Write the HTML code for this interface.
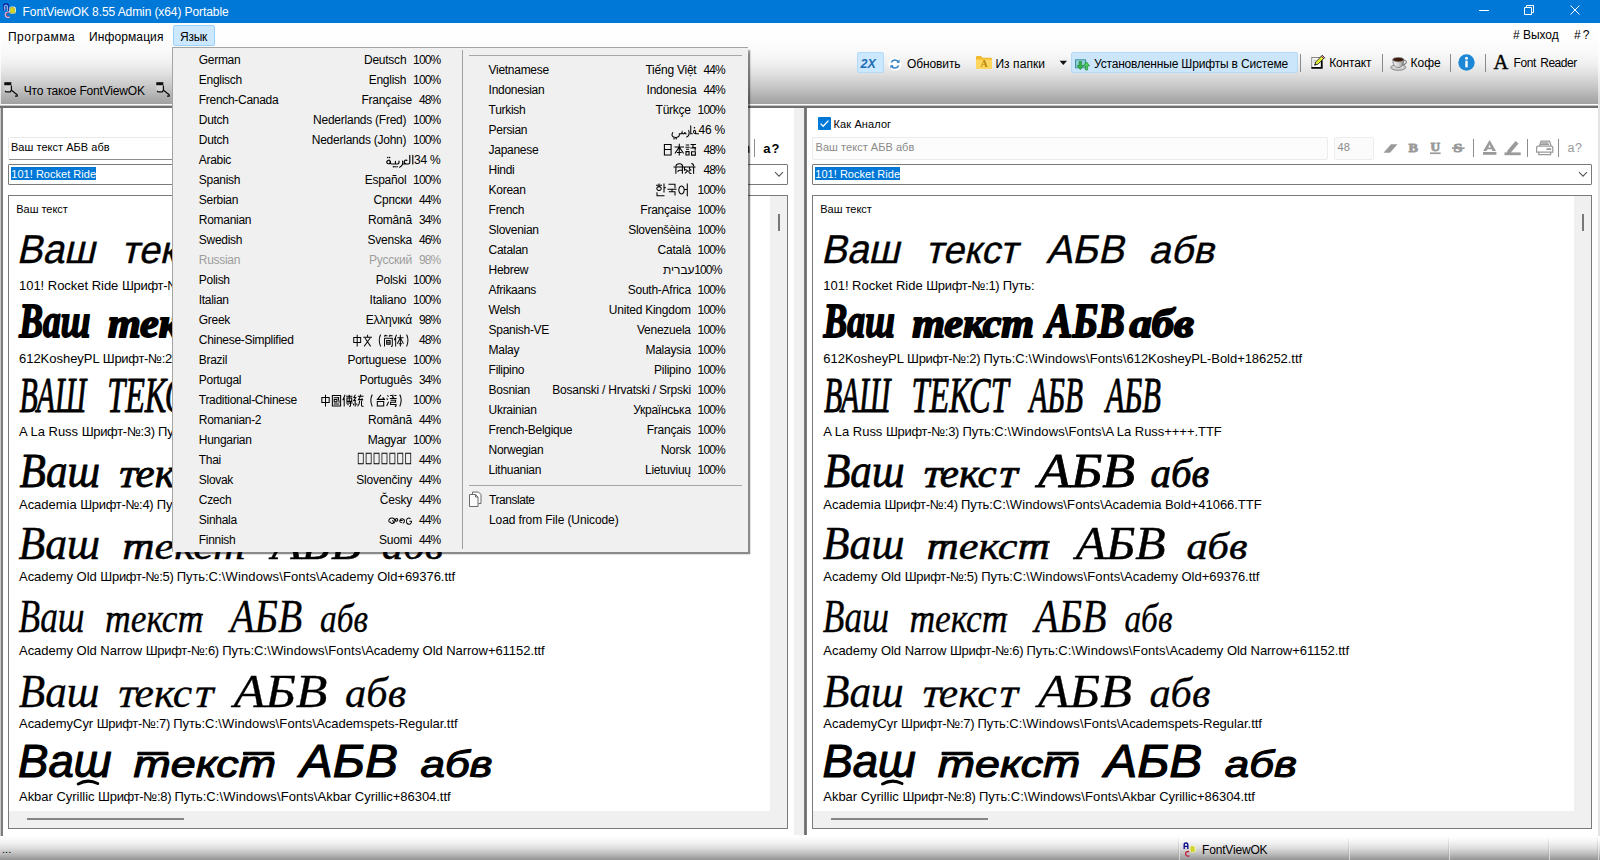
<!DOCTYPE html>
<html lang="ru"><head><meta charset="utf-8"><title>FontViewOK</title>
<style>
html,body{margin:0;padding:0}
body{width:1600px;height:860px;position:relative;overflow:hidden;background:#fff;font-family:"Liberation Sans",sans-serif}
svg{position:absolute;overflow:visible}
</style></head><body>
<div style="position:absolute;left:0px;top:0px;width:1600px;height:23px;box-sizing:border-box;background:#0078d7;"></div>
<svg style="left:3px;top:3px" width="14" height="16" viewBox="0 0 14 16">
<path d="M1 8V2.5Q1 1 3 1Q5 1 5 2.5V8M1 5H5" fill="none" stroke="#00128c" stroke-width="1.6"/>
<path d="M1.3 8V3Q1.3 2 3 2Q4.6 2 4.6 3V8M1.3 5H4.6" fill="none" stroke="#dfe9ff" stroke-width=".7"/>
<rect x="6.3" y="3.6" width="6.6" height="7.2" rx="2.4" fill="#f4f7d0"/>
<path d="M7.6 4.6h2.4q1.6 0 1.6 1.3q0 1.1-1.2 1.3q1.5.2 1.5 1.5q0 1.4-1.8 1.4H7.6z" fill="#d7dc1e" stroke="#8d8f10" stroke-width=".5"/>
<path d="M6.3 9.3Q2.4 8.6 2.4 11.6Q2.4 14.8 6.6 14" fill="none" stroke="#e9c3da" stroke-width="1.5"/>
<path d="M6 9.6Q3 9 3 11.6Q3 14 6.4 13.6" fill="none" stroke="#b4244a" stroke-width=".7"/>
</svg>
<div style="position:absolute;left:22.6px;top:5px;font:normal normal 12px/14px 'Liberation Sans',sans-serif;color:#fff;white-space:pre;letter-spacing:-0.09px;">FontViewOK 8.55 Admin (x64) Portable</div>
<svg style="left:1470px;top:0" width="130" height="23" viewBox="0 0 130 23" fill="none" stroke="#fff" stroke-width="1">
<path d="M9 10.5h10"/>
<path d="M54.5 7.5h7v7h-7zM56.5 7.5v-2h7v7h-2"/>
<path d="M100.5 5.5l9 9M109.5 5.5l-9 9"/>
</svg>
<div style="position:absolute;left:0px;top:23px;width:1600px;height:81px;box-sizing:border-box;background:linear-gradient(#ffffff 0%,#fdfdfd 22%,#f8f8f8 38%,#f0f0f0 50%,#e1e1e1 62%,#cbcbcb 76%,#b2b2b2 90%,#a1a1a1 100%);"></div>
<div style="position:absolute;left:0px;top:23px;width:1px;height:81px;box-sizing:border-box;background:rgba(255,255,255,.75);"></div>
<div style="position:absolute;left:1598px;top:23px;width:2px;height:81px;box-sizing:border-box;background:rgba(255,255,255,.6);"></div>
<div style="position:absolute;left:0px;top:104px;width:1600px;height:1px;box-sizing:border-box;background:#fbfbfb;"></div>
<div style="position:absolute;left:0px;top:105px;width:1600px;height:1px;box-sizing:border-box;background:#c4c4c4;"></div>
<div style="position:absolute;left:0px;top:106px;width:1600px;height:2px;box-sizing:border-box;background:#6f6f6f;"></div>
<div style="position:absolute;left:8px;top:29.5px;font:normal normal 12px/14px 'Liberation Sans',sans-serif;color:#000;white-space:pre;letter-spacing:0.475px;">Программа</div>
<div style="position:absolute;left:89px;top:29.5px;font:normal normal 12px/14px 'Liberation Sans',sans-serif;color:#000;white-space:pre;letter-spacing:0.105px;">Информация</div>
<div style="position:absolute;left:173px;top:25px;width:42px;height:21px;box-sizing:border-box;background:#cce8ff;border:1px solid #99d1ff;border-radius:2px;"></div>
<div style="position:absolute;left:180px;top:29.5px;font:normal normal 12px/14px 'Liberation Sans',sans-serif;color:#000;white-space:pre;letter-spacing:-0.245px;">Язык</div>
<div style="position:absolute;left:1513px;top:27.5px;font:normal normal 12px/14px 'Liberation Sans',sans-serif;color:#000;white-space:pre;letter-spacing:-0.045px;"># Выход</div>
<div style="position:absolute;left:1574px;top:27.5px;font:normal normal 12px/14px 'Liberation Sans',sans-serif;color:#000;white-space:pre;letter-spacing:-0.645px;"># ?</div>
<svg style="left:3px;top:81px" width="17" height="18" viewBox="0 0 17 18" fill="none" stroke="#0a0a0a" stroke-width="1.200">
<rect x="1.300" y="4.200" width="6.800" height="6.400" fill="#d9d9d9" stroke="none" opacity=".7"/>
<path d="M1.300 2.700h7" stroke-width="3"/><path d="M3.600 2.300h.1M6 2.900h.1" stroke="#e8e8e8" stroke-width="1"/>
<path d="M8.400 4.600V9.300M2 9.800l1.100 1.100h4.200l1.100-1.700M8.500 9.200l5.700 4.600v1.400h-2.200"/>
</svg>
<div style="position:absolute;left:23.8px;top:83.6px;font:normal normal 12px/14px 'Liberation Sans',sans-serif;color:#000;white-space:pre;letter-spacing:-0.185px;">Что такое FontViewOK</div>
<svg style="left:155px;top:81px" width="17" height="18" viewBox="0 0 17 18" fill="none" stroke="#0a0a0a" stroke-width="1.200">
<rect x="1.300" y="4.200" width="6.800" height="6.400" fill="#d9d9d9" stroke="none" opacity=".7"/>
<path d="M1.300 2.700h7" stroke-width="3"/><path d="M3.600 2.300h.1M6 2.900h.1" stroke="#e8e8e8" stroke-width="1"/>
<path d="M8.400 4.600V9.300M2 9.800l1.100 1.100h4.200l1.100-1.700M8.500 9.200l5.700 4.600v1.400h-2.200"/>
</svg>
<div style="position:absolute;left:857px;top:52px;width:27px;height:21px;box-sizing:border-box;background:#cce8ff;border:1px solid #b3d9f8;border-radius:2px;"></div>
<div style="position:absolute;left:860.4px;top:57.400000000000006px;font:italic bold 12.5px/14px 'Liberation Sans',sans-serif;color:#1c6db2;white-space:pre;letter-spacing:0.255px;">2X</div>
<svg style="left:888px;top:57px" width="14" height="14" viewBox="0 0 14 14">
<circle cx="7" cy="7" r="6.6" fill="#fff"/>
<path d="M10.6 5.2A4 4 0 0 0 3.3 5.6M3.4 8.8A4 4 0 0 0 10.7 8.4" fill="none" stroke="#2f7fc1" stroke-width="1.5"/>
<path d="M11.6 2.6v3.2H8.4zM2.4 11.4V8.2h3.2z" fill="#2f7fc1"/>
</svg>
<div style="position:absolute;left:907px;top:57.099999999999994px;font:normal normal 12px/14px 'Liberation Sans',sans-serif;color:#000;white-space:pre;letter-spacing:-0.115px;">Обновить</div>
<svg style="left:975px;top:55px" width="18" height="15" viewBox="0 0 18 15">
<path d="M1 2.2Q1 1 2.2 1H6l1.6 1.8H16q1 0 1 1V13q0 1-1 1H2q-1 0-1-1z" fill="#f1b92f"/>
<path d="M1 4.6h16V13q0 1-1 1H2q-1 0-1-1z" fill="#ffd75e"/>
<text x="9" y="12.4" font-family="Liberation Serif,serif" font-weight="bold" font-size="10" text-anchor="middle" fill="#b8860b">A</text>
</svg>
<div style="position:absolute;left:995.4px;top:57.099999999999994px;font:normal normal 12px/14px 'Liberation Sans',sans-serif;color:#000;white-space:pre;letter-spacing:0.085px;">Из папки</div>
<svg style="left:1059px;top:60px" width="9" height="6" viewBox="0 0 9 6"><path d="M.6 .8h7.4L4.3 5z" fill="#111"/></svg>
<div style="position:absolute;left:1071px;top:52px;width:227px;height:21px;box-sizing:border-box;background:#cbe6fb;border:1px solid #b3d9f8;border-radius:2px;"></div>
<svg style="left:1075px;top:59px" width="16" height="13" viewBox="0 0 16 13">
<rect x=".5" y=".8" width="10" height="8" fill="#8fd0d8" stroke="#3f8f9c" stroke-width="1"/>
<path d="M4.2 2.5h2.2v4h2l-3.1 4.2-3.1-4.2h2z" fill="#36b64a" stroke="#157a26" stroke-width=".6"/>
<path d="M10.4 11h2.2V7h2L11.5 2.8 8.4 7h2z" fill="#4fd062" stroke="#157a26" stroke-width=".6"/>
</svg>
<div style="position:absolute;left:1094px;top:57.099999999999994px;font:normal normal 12px/14px 'Liberation Sans',sans-serif;color:#000;white-space:pre;letter-spacing:-0.175px;">Установленные Шрифты в Системе</div>
<div style="position:absolute;left:1300px;top:54px;width:1px;height:18px;box-sizing:border-box;background:#8a8a8a;"></div>
<svg style="left:1310px;top:54px" width="16" height="16" viewBox="0 0 16 16">
<rect x="1.800" y="3.400" width="9.400" height="10" fill="#fff" stroke="#6a6a6a" stroke-width=".8"/>
<path d="M1.400 13.800h10.400v-7.600" fill="none" stroke="#000" stroke-width="1.700"/>
<path d="M4.600 11.200l1.200-3.400 6.400-6.400 2.300 2.300-6.400 6.400z" fill="#e2ea2c" stroke="#222" stroke-width=".9"/>
<path d="M11.300 2.300l1-1 2.300 2.300-1 1z" fill="#ee8fa6" stroke="#222" stroke-width=".7"/>
<path d="M4.600 11.200l.6-1.800 1.200 1.200z" fill="#111"/>
<path d="M3.200 6.200h3M3.200 8.200h2" stroke="#9a9a9a" stroke-width=".7"/>
</svg>
<div style="position:absolute;left:1329.2px;top:55.7px;font:normal normal 12px/14px 'Liberation Sans',sans-serif;color:#000;white-space:pre;letter-spacing:-0.145px;">Контакт</div>
<div style="position:absolute;left:1382px;top:54px;width:1px;height:18px;box-sizing:border-box;background:#8a8a8a;"></div>
<svg style="left:1390px;top:55px" width="18" height="16" viewBox="0 0 18 16">
<defs><linearGradient id="cupg" x1="0" x2="1" y1="0" y2="0"><stop offset="0" stop-color="#f4f4f4"/><stop offset=".55" stop-color="#cfcfcf"/><stop offset="1" stop-color="#8e8e8e"/></linearGradient></defs>
<ellipse cx="8.300" cy="12.400" rx="7.600" ry="2.900" fill="#c9c9c9" stroke="#777" stroke-width=".8"/>
<ellipse cx="8.300" cy="12" rx="5" ry="1.500" fill="#e6e6e6"/>
<path d="M2.800 4.600Q2.800 12.600 8.300 12.600Q13.800 12.600 13.800 4.600z" fill="url(#cupg)" stroke="#6f6f6f" stroke-width=".8"/>
<path d="M13.600 5.600q3.200-.4 2.800 1.800-.5 2-3.600 2.300" fill="none" stroke="#7d7d7d" stroke-width="1.100"/>
<ellipse cx="8.300" cy="4.600" rx="5.500" ry="2.100" fill="#3d1a0c" stroke="#777" stroke-width=".7"/>
</svg>
<div style="position:absolute;left:1410.4px;top:55.7px;font:normal normal 12px/14px 'Liberation Sans',sans-serif;color:#000;white-space:pre;letter-spacing:0.055px;">Кофе</div>
<div style="position:absolute;left:1450px;top:54px;width:1px;height:18px;box-sizing:border-box;background:#8a8a8a;"></div>
<svg style="left:1458px;top:54px" width="17" height="17" viewBox="0 0 17 17">
<circle cx="8.5" cy="8.5" r="8.2" fill="#1c87d4"/>
<rect x="7.3" y="6.7" width="2.4" height="6.6" fill="#fff"/><circle cx="8.5" cy="4.2" r="1.5" fill="#fff"/>
</svg>
<div style="position:absolute;left:1485px;top:54px;width:1px;height:18px;box-sizing:border-box;background:#8a8a8a;"></div>
<div style="position:absolute;left:1493.4px;top:50.599999999999994px;font:normal normal 20.5px/22px 'Liberation Serif',serif;color:#000;white-space:pre;letter-spacing:0.055px;-webkit-text-stroke:.45px #000;">A</div>
<div style="position:absolute;left:1513.6px;top:55.599999999999994px;font:normal normal 12px/14px 'Liberation Sans',sans-serif;color:#000;white-space:pre;letter-spacing:-0.465px;word-spacing:1.6px;">Font Reader</div>
<div style="position:absolute;left:0px;top:835px;width:1600px;height:1px;box-sizing:border-box;background:#fdfdfd;"></div>
<div style="position:absolute;left:0px;top:836px;width:1600px;height:24px;box-sizing:border-box;background:linear-gradient(#ffffff 0%,#f4f4f4 25%,#dedede 50%,#bcbcbc 75%,#949494 100%);"></div>
<div style="position:absolute;left:2px;top:842.5px;font:normal normal 11px/12px 'Liberation Sans',sans-serif;color:#000;white-space:pre;letter-spacing:0.055px;">...</div>
<div style="position:absolute;left:1178px;top:838px;width:1px;height:22px;box-sizing:border-box;background:linear-gradient(#f0f0f0,#9a9a9a);"></div>
<div style="position:absolute;left:1179px;top:838px;width:1px;height:22px;box-sizing:border-box;background:linear-gradient(#ffffff,#d0d0d0);"></div>
<div style="position:absolute;left:1348px;top:838px;width:1px;height:22px;box-sizing:border-box;background:linear-gradient(#f0f0f0,#9a9a9a);"></div>
<div style="position:absolute;left:1349px;top:838px;width:1px;height:22px;box-sizing:border-box;background:linear-gradient(#ffffff,#d0d0d0);"></div>
<div style="position:absolute;left:1448px;top:838px;width:1px;height:22px;box-sizing:border-box;background:linear-gradient(#f0f0f0,#9a9a9a);"></div>
<div style="position:absolute;left:1449px;top:838px;width:1px;height:22px;box-sizing:border-box;background:linear-gradient(#ffffff,#d0d0d0);"></div>
<div style="position:absolute;left:1548px;top:838px;width:1px;height:22px;box-sizing:border-box;background:linear-gradient(#f0f0f0,#9a9a9a);"></div>
<div style="position:absolute;left:1549px;top:838px;width:1px;height:22px;box-sizing:border-box;background:linear-gradient(#ffffff,#d0d0d0);"></div>
<div style="position:absolute;left:1597px;top:838px;width:1px;height:22px;box-sizing:border-box;background:linear-gradient(#f0f0f0,#9a9a9a);"></div>
<div style="position:absolute;left:1598px;top:838px;width:1px;height:22px;box-sizing:border-box;background:linear-gradient(#ffffff,#d0d0d0);"></div>
<svg style="left:1183px;top:842px" width="15" height="16" viewBox="0 0 15 16">
<path d="M1.2 7V2.4Q1.2 1 3 1Q4.8 1 4.8 2.4V7M1.2 4.4H4.8" fill="none" stroke="#10108c" stroke-width="1.4"/>
<rect x="6.5" y="3.6" width="6.5" height="7" rx="2" fill="#f2f4b0"/>
<path d="M8 4.8h2q1.4 0 1.4 1.1 0 1-1 1.2 1.3.2 1.3 1.3 0 1.2-1.6 1.2H8z" fill="#d9de22" stroke="#a2a418" stroke-width=".4"/>
<path d="M6.2 9.6Q2.6 9 2.6 11.8Q2.6 14.6 6.4 14" fill="none" stroke="#c01f3c" stroke-width="1.3"/>
</svg>
<div style="position:absolute;left:1202px;top:843px;font:normal normal 12px/14px 'Liberation Sans',sans-serif;color:#000;white-space:pre;letter-spacing:-0.175px;">FontViewOK</div>
<div style="position:absolute;left:0px;top:108px;width:1px;height:728px;box-sizing:border-box;background:#c8c8c8;"></div>
<div style="position:absolute;left:1px;top:108px;width:2px;height:728px;box-sizing:border-box;background:#7d7d7d;"></div>
<div style="position:absolute;left:794px;top:108px;width:10px;height:727px;box-sizing:border-box;background:#f0f0f0;"></div>
<div style="position:absolute;left:804px;top:108px;width:3px;height:727px;box-sizing:border-box;background:linear-gradient(90deg,#8a8a8a,#6a6a6a 50%,#8f8f8f);"></div>
<div style="position:absolute;left:1598px;top:104px;width:2px;height:732px;box-sizing:border-box;background:#e4e4e4;"></div>
<div style="position:absolute;left:8px;top:137px;width:516px;height:23px;box-sizing:border-box;background:#fff;border:1px solid #e9e9e9;border-bottom-color:#8e8e8e;border-radius:2px;"></div>
<div style="position:absolute;left:11px;top:141px;font:normal normal 11px/12px 'Liberation Sans',sans-serif;color:#000;white-space:pre;letter-spacing:0.035px;">Ваш текст АБВ абв</div>
<div style="position:absolute;left:530px;top:137px;width:40px;height:23px;box-sizing:border-box;background:#fff;border:1px solid #ededed;border-radius:2px;"></div>
<div style="position:absolute;left:533.5px;top:141px;font:normal normal 11px/12px 'Liberation Sans',sans-serif;color:#000;white-space:pre;letter-spacing:0.055px;">48</div>
<svg style="left:579px;top:139px" width="210" height="18" viewBox="0 0 210 18" fill="#222" stroke="none">
<path d="M.5 13.800l7.500-8.600h6.500l-7.500 8.600z"/>
<g font-family="Liberation Serif,serif" font-weight="bold" stroke="#222" stroke-width=".9" stroke-linejoin="round">
<text x="25.400" y="13.400" font-size="13" textLength="9.400" lengthAdjust="spacingAndGlyphs">B</text>
<text x="47.400" y="12.400" font-size="12" textLength="9.600" lengthAdjust="spacingAndGlyphs">U</text>
<text x="70.600" y="13.400" font-size="13.500" textLength="9" lengthAdjust="spacingAndGlyphs">S</text></g>
<rect x="47" y="13.400" width="10.600" height="1.700"/>
<rect x="69" y="8.300" width="12.600" height="1.700"/>
<rect x="90" y="0" width="1" height="18" fill="#8d8d8d"/>
<path d="M106.600 1l6.400 11h-3.400l-.9-1.800h-4.200l-.9 1.800h-3.400zM106.600 5.400l-1.300 3h2.600z"/><rect x="100" y="13" width="13.400" height="2.800"/>
<path d="M124.500 11.500l8-9.500 3 2.400-8 9.500h-3.600z"/><rect x="121.500" y="13.400" width="16.200" height="2.800"/>
<rect x="144" y="0" width="1" height="18" fill="#8d8d8d"/>
<g fill="none" stroke="#222" stroke-width="1.250"><path d="M156.500 7l1.600-5h8.400l1.600 5M153.600 8.600Q153.600 7 155.200 7h13q1.600 0 1.600 1.600v4.600h-16.200zM155.800 13.200v2.400h11.800v-2.400M158.400 3.800h7M157.800 5.400h8.200"/></g><rect x="163.500" y="9.200" width="4.600" height="1.800"/>
<rect x="175" y="0" width="1" height="18" fill="#8d8d8d"/>
</svg>
<div style="position:absolute;left:763.3px;top:141.2px;font:normal bold 13px/15px 'Liberation Sans',sans-serif;color:#000;white-space:pre;letter-spacing:0.855px;">a?</div>
<div style="position:absolute;left:8px;top:164px;width:780px;height:21px;box-sizing:border-box;background:#fff;border:1px solid #7a7a7a;border-radius:1px;"></div>
<div style="position:absolute;left:10.6px;top:167px;width:85.4px;height:13px;box-sizing:border-box;background:#0078d7;"></div>
<div style="position:absolute;left:11.3px;top:167.6px;font:normal normal 11px/12px 'Liberation Sans',sans-serif;color:#fff;white-space:pre;letter-spacing:0.025px;">101! Rocket Ride</div>
<svg style="left:774px;top:171px" width="10" height="7" viewBox="0 0 10 7"><path d="M1 1.200l4 4 4-4" fill="none" stroke="#555" stroke-width="1.100"/></svg>
<div style="position:absolute;left:8px;top:195px;width:780px;height:634px;box-sizing:border-box;background:#fff;border:1px solid #7a7a7a;"></div>
<div style="position:absolute;left:770px;top:196px;width:17px;height:632px;box-sizing:border-box;background:#f0f0f0;"></div>
<div style="position:absolute;left:9px;top:811px;width:778px;height:17px;box-sizing:border-box;background:#f0f0f0;"></div>
<div style="position:absolute;left:777.5px;top:214px;width:2px;height:17px;box-sizing:border-box;background:#787878;"></div>
<div style="position:absolute;left:27px;top:818px;width:157px;height:2px;box-sizing:border-box;background:#858585;"></div>
<div style="position:absolute;left:16.3px;top:202.7px;font:normal normal 11px/12px 'Liberation Sans',sans-serif;color:#000;white-space:pre;letter-spacing:-0.045px;">Ваш текст</div>
<div style="position:absolute;left:812px;top:137px;width:516px;height:23px;box-sizing:border-box;background:#fcfcfc;border:1px solid #ececec;border-radius:2px;"></div>
<div style="position:absolute;left:815.6px;top:141px;font:normal normal 11px/12px 'Liberation Sans',sans-serif;color:#8b8b8b;white-space:pre;letter-spacing:0.035px;">Ваш текст АБВ абв</div>
<div style="position:absolute;left:1334px;top:137px;width:40px;height:23px;box-sizing:border-box;background:#fbfbfb;border:1px solid #ededed;border-radius:2px;"></div>
<div style="position:absolute;left:1337.5px;top:141px;font:normal normal 11px/12px 'Liberation Sans',sans-serif;color:#8b8b8b;white-space:pre;letter-spacing:0.055px;">48</div>
<svg style="left:1383px;top:139px" width="210" height="18" viewBox="0 0 210 18" fill="#9a9a9a" stroke="none">
<path d="M.5 13.800l7.500-8.600h6.500l-7.500 8.600z"/>
<g font-family="Liberation Serif,serif" font-weight="bold" stroke="#9a9a9a" stroke-width=".9" stroke-linejoin="round">
<text x="25.400" y="13.400" font-size="13" textLength="9.400" lengthAdjust="spacingAndGlyphs">B</text>
<text x="47.400" y="12.400" font-size="12" textLength="9.600" lengthAdjust="spacingAndGlyphs">U</text>
<text x="70.600" y="13.400" font-size="13.500" textLength="9" lengthAdjust="spacingAndGlyphs">S</text></g>
<rect x="47" y="13.400" width="10.600" height="1.700"/>
<rect x="69" y="8.300" width="12.600" height="1.700"/>
<rect x="90" y="0" width="1" height="18" fill="#8d8d8d"/>
<path d="M106.600 1l6.400 11h-3.400l-.9-1.800h-4.200l-.9 1.800h-3.400zM106.600 5.400l-1.300 3h2.600z"/><rect x="100" y="13" width="13.400" height="2.800"/>
<path d="M124.500 11.500l8-9.500 3 2.400-8 9.500h-3.600z"/><rect x="121.500" y="13.400" width="16.200" height="2.800"/>
<rect x="144" y="0" width="1" height="18" fill="#8d8d8d"/>
<g fill="none" stroke="#9a9a9a" stroke-width="1.250"><path d="M156.500 7l1.600-5h8.400l1.600 5M153.600 8.600Q153.600 7 155.200 7h13q1.600 0 1.600 1.600v4.600h-16.200zM155.800 13.200v2.400h11.800v-2.400M158.400 3.800h7M157.800 5.400h8.200"/></g><rect x="163.500" y="9.200" width="4.600" height="1.800"/>
<rect x="175" y="0" width="1" height="18" fill="#8d8d8d"/>
</svg>
<div style="position:absolute;left:1567.4px;top:141.4px;font:normal normal 12.5px/14px 'Liberation Sans',sans-serif;color:#9a9a9a;white-space:pre;letter-spacing:0.555px;">a?</div>
<div style="position:absolute;left:812px;top:164px;width:780px;height:21px;box-sizing:border-box;background:#fff;border:1px solid #7a7a7a;border-radius:1px;"></div>
<div style="position:absolute;left:814.6px;top:167px;width:85.4px;height:13px;box-sizing:border-box;background:#0078d7;"></div>
<div style="position:absolute;left:815.3px;top:167.6px;font:normal normal 11px/12px 'Liberation Sans',sans-serif;color:#fff;white-space:pre;letter-spacing:0.025px;">101! Rocket Ride</div>
<svg style="left:1578px;top:171px" width="10" height="7" viewBox="0 0 10 7"><path d="M1 1.200l4 4 4-4" fill="none" stroke="#555" stroke-width="1.100"/></svg>
<div style="position:absolute;left:818px;top:117px;width:13px;height:13px;box-sizing:border-box;background:#0078d7;border-radius:1px;"></div>
<svg style="left:818px;top:117px" width="13" height="13" viewBox="0 0 13 13"><path d="M2.600 6.600l2.600 2.600 5.200-5.600" fill="none" stroke="#fff" stroke-width="1.300"/></svg>
<div style="position:absolute;left:833.6px;top:117.8px;font:normal normal 11px/12px 'Liberation Sans',sans-serif;color:#000;white-space:pre;letter-spacing:0.105px;">Как Аналог</div>
<div style="position:absolute;left:812px;top:195px;width:780px;height:634px;box-sizing:border-box;background:#fff;border:1px solid #7a7a7a;"></div>
<div style="position:absolute;left:1574px;top:196px;width:17px;height:632px;box-sizing:border-box;background:#f0f0f0;"></div>
<div style="position:absolute;left:813px;top:811px;width:778px;height:17px;box-sizing:border-box;background:#f0f0f0;"></div>
<div style="position:absolute;left:1581.5px;top:214px;width:2px;height:17px;box-sizing:border-box;background:#787878;"></div>
<div style="position:absolute;left:831px;top:818px;width:157px;height:2px;box-sizing:border-box;background:#858585;"></div>
<div style="position:absolute;left:820.3px;top:202.7px;font:normal normal 11px/12px 'Liberation Sans',sans-serif;color:#000;white-space:pre;letter-spacing:-0.045px;">Ваш текст</div>
<svg style="left:0;top:0" width="1600" height="860" viewBox="0 0 1600 860" fill="#000">
<g transform="matrix(0.9547 0 0 1 16.58 263.00)" font-family="Liberation Sans,sans-serif" font-size="40.48" stroke="#000" stroke-width="0.4" stroke-linejoin="round"><text transform="translate(0.00 0) skewX(-13)">Ваш</text></g>
<g transform="matrix(0.9960 0 0 1 121.30 263.00)" font-family="Liberation Sans,sans-serif" font-size="38.18" stroke="#000" stroke-width="0.4" stroke-linejoin="round"><text transform="translate(0.00 0) skewX(-13)">текст</text></g>
<g transform="matrix(0.9641 0 0 1 241.79 263.00)" font-family="Liberation Sans,sans-serif" font-size="40.48" stroke="#000" stroke-width="0.4" stroke-linejoin="round"><text transform="translate(0.00 0) skewX(-13)">АБВ</text></g>
<g transform="matrix(1.0335 0 0 1 343.89 263.00)" font-family="Liberation Sans,sans-serif" font-size="38.18" stroke="#000" stroke-width="0.4" stroke-linejoin="round"><text transform="translate(0.00 0) skewX(-13)">абв</text></g>
<g transform="matrix(0.7385 0 0 1 19.29 336.55)" font-family="Liberation Serif,serif" font-size="48.24" stroke="#000" stroke-width="1.9" stroke-linejoin="round"><text x="0.00" font-style="italic" font-weight="bold">Ваш</text></g>
<g transform="matrix(1.0339 0 0 1 107.90 336.55)" font-family="Liberation Serif,serif" font-size="40.64" stroke="#000" stroke-width="1.9" stroke-linejoin="round"><text x="0.00" font-style="italic" font-weight="bold">текст</text></g>
<g transform="matrix(0.8342 0 0 1 241.30 336.55)" font-family="Liberation Serif,serif" font-size="48.24" stroke="#000" stroke-width="1.9" stroke-linejoin="round"><text x="0.00" font-style="italic" font-weight="bold">АБВ</text></g>
<g transform="matrix(1.0974 0 0 1 325.17 336.55)" font-family="Liberation Serif,serif" font-size="40.64" stroke="#000" stroke-width="1.9" stroke-linejoin="round"><text x="0.00" font-style="italic" font-weight="bold">абв</text></g>
<g transform="matrix(0.5913 0 0 1 19.60 411.55)" font-family="Liberation Serif,serif" font-size="50.53" stroke="#000" stroke-width="0.9" stroke-linejoin="round"><text x="0.00" font-style="italic">ВАШ</text></g>
<g transform="matrix(0.6392 0 0 1 107.19 411.55)" font-family="Liberation Serif,serif" font-size="50.53" stroke="#000" stroke-width="0.9" stroke-linejoin="round"><text x="0.00" font-style="italic">ТЕКСТ</text></g>
<g transform="matrix(0.5850 0 0 1 225.27 411.55)" font-family="Liberation Serif,serif" font-size="50.53" stroke="#000" stroke-width="0.9" stroke-linejoin="round"><text x="0.00" font-style="italic">АБВ</text></g>
<g transform="matrix(0.6049 0 0 1 301.35 411.55)" font-family="Liberation Serif,serif" font-size="50.53" stroke="#000" stroke-width="0.9" stroke-linejoin="round"><text x="0.00" font-style="italic">АБВ</text></g>
<g transform="matrix(0.8734 0 0 1 19.59 487.10)" font-family="Liberation Serif,serif" font-size="49.47" stroke="#000" stroke-width="0.8" stroke-linejoin="round"><text x="0.00" font-style="italic">Ваш</text></g>
<g transform="matrix(1.0575 0 0 1 116.62 487.10)" font-family="Liberation Serif,serif" font-size="40.85" stroke="#000" stroke-width="0.8" stroke-linejoin="round"><text transform="translate(0.00 0) skewX(-13)">т</text><text x="17.85" font-style="italic">екс</text><text transform="translate(71.67 0) skewX(-13)">т</text></g>
<g transform="matrix(1.0823 0 0 1 233.67 487.10)" font-family="Liberation Serif,serif" font-size="49.47" stroke="#000" stroke-width="0.8" stroke-linejoin="round"><text x="0.00" font-style="italic">АБВ</text></g>
<g transform="matrix(1.0032 0 0 1 346.20 487.10)" font-family="Liberation Serif,serif" font-size="40.85" stroke="#000" stroke-width="0.8" stroke-linejoin="round"><text x="0.00" font-style="italic">абв</text></g>
<g transform="matrix(0.9252 0 0 1 18.49 559.05)" font-family="Liberation Serif,serif" font-size="47.33" stroke="#000" stroke-width="0.5" stroke-linejoin="round"><text x="0.00" font-style="italic">Ваш</text></g>
<g transform="matrix(1.1775 0 0 1 122.28 559.05)" font-family="Liberation Serif,serif" font-size="37.87" stroke="#000" stroke-width="0.5" stroke-linejoin="round"><text x="0.00" font-style="italic">текст</text><rect x="3.79" y="-17.80" width="21.88" height="1.51"/><rect x="82.47" y="-17.80" width="21.88" height="1.51"/></g>
<g transform="matrix(1.0476 0 0 1 271.46 559.05)" font-family="Liberation Serif,serif" font-size="47.33" stroke="#000" stroke-width="0.5" stroke-linejoin="round"><text x="0.00" font-style="italic">АБВ</text></g>
<g transform="matrix(1.1212 0 0 1 382.09 559.05)" font-family="Liberation Serif,serif" font-size="37.87" stroke="#000" stroke-width="0.5" stroke-linejoin="round"><text x="0.00" font-style="italic">абв</text></g>
<g transform="matrix(0.7504 0 0 1 18.49 632.35)" font-family="Liberation Serif,serif" font-size="47.25" stroke="#000" stroke-width="0.3" stroke-linejoin="round"><text x="0.00" font-style="italic">Ваш</text></g>
<g transform="matrix(0.9048 0 0 1 105.09 632.35)" font-family="Liberation Serif,serif" font-size="39.26" stroke="#000" stroke-width="0.3" stroke-linejoin="round"><text x="0.00" font-style="italic">текст</text><rect x="3.93" y="-18.45" width="22.68" height="1.41"/><rect x="85.48" y="-18.45" width="22.68" height="1.41"/></g>
<g transform="matrix(0.8405 0 0 1 230.30 632.35)" font-family="Liberation Serif,serif" font-size="47.25" stroke="#000" stroke-width="0.3" stroke-linejoin="round"><text x="0.00" font-style="italic">АБВ</text></g>
<g transform="matrix(0.8507 0 0 1 320.09 632.35)" font-family="Liberation Serif,serif" font-size="39.26" stroke="#000" stroke-width="0.3" stroke-linejoin="round"><text x="0.00" font-style="italic">абв</text></g>
<g transform="matrix(0.9167 0 0 1 18.70 707.35)" font-family="Liberation Serif,serif" font-size="47.25" stroke="#000" stroke-width="0.3" stroke-linejoin="round"><text x="0.00" font-style="italic">Ваш</text></g>
<g transform="matrix(1.0466 0 0 1 115.40 707.35)" font-family="Liberation Serif,serif" font-size="41.91" stroke="#000" stroke-width="0.3" stroke-linejoin="round"><text transform="translate(0.00 0) skewX(-13)">т</text><text x="18.32" font-style="italic">екс</text><text transform="translate(73.54 0) skewX(-13)">т</text></g>
<g transform="matrix(1.0968 0 0 1 233.63 707.35)" font-family="Liberation Serif,serif" font-size="47.25" stroke="#000" stroke-width="0.3" stroke-linejoin="round"><text x="0.00" font-style="italic">АБВ</text></g>
<g transform="matrix(1.0131 0 0 1 345.09 707.35)" font-family="Liberation Serif,serif" font-size="41.91" stroke="#000" stroke-width="0.3" stroke-linejoin="round"><text x="0.00" font-style="italic">абв</text></g>
<g transform="matrix(0.9983 0 0 1 18.08 776.95)" font-family="Liberation Sans,sans-serif" font-size="45.64" stroke="#000" stroke-width="1.1" stroke-linejoin="round"><text x="0.00" font-style="italic">Ваш</text></g>
<g transform="matrix(1.1997 0 0 1 133.49 776.95)" font-family="Liberation Sans,sans-serif" font-size="37.34" stroke="#000" stroke-width="1.1" stroke-linejoin="round"><text x="0.00" font-style="italic">текст</text><rect x="3.73" y="-24.75" width="24.88" height="2.43"/><rect x="91.90" y="-24.75" width="24.88" height="2.43"/></g>
<g transform="matrix(1.0836 0 0 1 299.87 776.95)" font-family="Liberation Sans,sans-serif" font-size="45.64" stroke="#000" stroke-width="1.1" stroke-linejoin="round"><text x="0.00" font-style="italic">АБВ</text></g>
<g transform="matrix(1.1766 0 0 1 420.48 776.95)" font-family="Liberation Sans,sans-serif" font-size="37.34" stroke="#000" stroke-width="1.1" stroke-linejoin="round"><text x="0.00" font-style="italic">абв</text></g>
<g transform="translate(-804.3 0)"><path d="M882.500 784q9.500-5.500 19.500-.5" fill="none" stroke="#000" stroke-width="3" stroke-linecap="round"/></g>
</svg>
<div style="position:absolute;left:19.0px;top:278px;font:13px/15px 'Liberation Sans',sans-serif;color:#000;white-space:pre"><span style="letter-spacing:-0.025px">101! Rocket Ride </span><span style="letter-spacing:-0.305px">Шрифт-№:1) </span><span style="letter-spacing:-0.085px">Путь:</span></div>
<div style="position:absolute;left:19.0px;top:351.25px;font:13px/15px 'Liberation Sans',sans-serif;color:#000;white-space:pre"><span style="letter-spacing:-0.025px">612KosheyPL </span><span style="letter-spacing:-0.305px">Шрифт-№:2) </span><span style="letter-spacing:-0.085px">Путь:</span><span style="letter-spacing:0.125px">C:\Windows\Fonts\</span><span style="letter-spacing:-0.045px">612KosheyPL-Bold+186252.ttf</span></div>
<div style="position:absolute;left:19.0px;top:423.75px;font:13px/15px 'Liberation Sans',sans-serif;color:#000;white-space:pre"><span style="letter-spacing:-0.025px">A La Russ </span><span style="letter-spacing:-0.305px">Шрифт-№:3) </span><span style="letter-spacing:-0.085px">Путь:</span><span style="letter-spacing:0.125px">C:\Windows\Fonts\</span><span style="letter-spacing:-0.045px">A La Russ++++.TTF</span></div>
<div style="position:absolute;left:19.0px;top:496.75px;font:13px/15px 'Liberation Sans',sans-serif;color:#000;white-space:pre"><span style="letter-spacing:-0.025px">Academia </span><span style="letter-spacing:-0.305px">Шрифт-№:4) </span><span style="letter-spacing:-0.085px">Путь:</span><span style="letter-spacing:0.125px">C:\Windows\Fonts\</span><span style="letter-spacing:-0.045px">Academia Bold+41066.TTF</span></div>
<div style="position:absolute;left:19.0px;top:569.25px;font:13px/15px 'Liberation Sans',sans-serif;color:#000;white-space:pre"><span style="letter-spacing:-0.025px">Academy Old </span><span style="letter-spacing:-0.305px">Шрифт-№:5) </span><span style="letter-spacing:-0.085px">Путь:</span><span style="letter-spacing:0.125px">C:\Windows\Fonts\</span><span style="letter-spacing:-0.045px">Academy Old+69376.ttf</span></div>
<div style="position:absolute;left:19.0px;top:642.5px;font:13px/15px 'Liberation Sans',sans-serif;color:#000;white-space:pre"><span style="letter-spacing:-0.025px">Academy Old Narrow </span><span style="letter-spacing:-0.305px">Шрифт-№:6) </span><span style="letter-spacing:-0.085px">Путь:</span><span style="letter-spacing:0.125px">C:\Windows\Fonts\</span><span style="letter-spacing:-0.045px">Academy Old Narrow+61152.ttf</span></div>
<div style="position:absolute;left:19.0px;top:715.5px;font:13px/15px 'Liberation Sans',sans-serif;color:#000;white-space:pre"><span style="letter-spacing:-0.025px">AcademyCyr </span><span style="letter-spacing:-0.305px">Шрифт-№:7) </span><span style="letter-spacing:-0.085px">Путь:</span><span style="letter-spacing:0.125px">C:\Windows\Fonts\</span><span style="letter-spacing:-0.045px">Academspets-Regular.ttf</span></div>
<div style="position:absolute;left:19.0px;top:788.5px;font:13px/15px 'Liberation Sans',sans-serif;color:#000;white-space:pre"><span style="letter-spacing:-0.025px">Akbar Cyrillic </span><span style="letter-spacing:-0.305px">Шрифт-№:8) </span><span style="letter-spacing:-0.085px">Путь:</span><span style="letter-spacing:0.125px">C:\Windows\Fonts\</span><span style="letter-spacing:-0.045px">Akbar Cyrillic+86304.ttf</span></div>
<svg style="left:0;top:0" width="1600" height="860" viewBox="0 0 1600 860" fill="#000">
<g transform="matrix(0.9547 0 0 1 820.88 263.00)" font-family="Liberation Sans,sans-serif" font-size="40.48" stroke="#000" stroke-width="0.4" stroke-linejoin="round"><text transform="translate(0.00 0) skewX(-13)">Ваш</text></g>
<g transform="matrix(0.9960 0 0 1 925.60 263.00)" font-family="Liberation Sans,sans-serif" font-size="38.18" stroke="#000" stroke-width="0.4" stroke-linejoin="round"><text transform="translate(0.00 0) skewX(-13)">текст</text></g>
<g transform="matrix(0.9641 0 0 1 1046.09 263.00)" font-family="Liberation Sans,sans-serif" font-size="40.48" stroke="#000" stroke-width="0.4" stroke-linejoin="round"><text transform="translate(0.00 0) skewX(-13)">АБВ</text></g>
<g transform="matrix(1.0335 0 0 1 1148.19 263.00)" font-family="Liberation Sans,sans-serif" font-size="38.18" stroke="#000" stroke-width="0.4" stroke-linejoin="round"><text transform="translate(0.00 0) skewX(-13)">абв</text></g>
<g transform="matrix(0.7385 0 0 1 823.59 336.55)" font-family="Liberation Serif,serif" font-size="48.24" stroke="#000" stroke-width="1.9" stroke-linejoin="round"><text x="0.00" font-style="italic" font-weight="bold">Ваш</text></g>
<g transform="matrix(1.0339 0 0 1 912.20 336.55)" font-family="Liberation Serif,serif" font-size="40.64" stroke="#000" stroke-width="1.9" stroke-linejoin="round"><text x="0.00" font-style="italic" font-weight="bold">текст</text></g>
<g transform="matrix(0.8342 0 0 1 1045.60 336.55)" font-family="Liberation Serif,serif" font-size="48.24" stroke="#000" stroke-width="1.9" stroke-linejoin="round"><text x="0.00" font-style="italic" font-weight="bold">АБВ</text></g>
<g transform="matrix(1.0974 0 0 1 1129.47 336.55)" font-family="Liberation Serif,serif" font-size="40.64" stroke="#000" stroke-width="1.9" stroke-linejoin="round"><text x="0.00" font-style="italic" font-weight="bold">абв</text></g>
<g transform="matrix(0.5913 0 0 1 823.90 411.55)" font-family="Liberation Serif,serif" font-size="50.53" stroke="#000" stroke-width="0.9" stroke-linejoin="round"><text x="0.00" font-style="italic">ВАШ</text></g>
<g transform="matrix(0.6392 0 0 1 911.49 411.55)" font-family="Liberation Serif,serif" font-size="50.53" stroke="#000" stroke-width="0.9" stroke-linejoin="round"><text x="0.00" font-style="italic">ТЕКСТ</text></g>
<g transform="matrix(0.5850 0 0 1 1029.57 411.55)" font-family="Liberation Serif,serif" font-size="50.53" stroke="#000" stroke-width="0.9" stroke-linejoin="round"><text x="0.00" font-style="italic">АБВ</text></g>
<g transform="matrix(0.6049 0 0 1 1105.65 411.55)" font-family="Liberation Serif,serif" font-size="50.53" stroke="#000" stroke-width="0.9" stroke-linejoin="round"><text x="0.00" font-style="italic">АБВ</text></g>
<g transform="matrix(0.8734 0 0 1 823.89 487.10)" font-family="Liberation Serif,serif" font-size="49.47" stroke="#000" stroke-width="0.8" stroke-linejoin="round"><text x="0.00" font-style="italic">Ваш</text></g>
<g transform="matrix(1.0575 0 0 1 920.92 487.10)" font-family="Liberation Serif,serif" font-size="40.85" stroke="#000" stroke-width="0.8" stroke-linejoin="round"><text transform="translate(0.00 0) skewX(-13)">т</text><text x="17.85" font-style="italic">екс</text><text transform="translate(71.67 0) skewX(-13)">т</text></g>
<g transform="matrix(1.0823 0 0 1 1037.97 487.10)" font-family="Liberation Serif,serif" font-size="49.47" stroke="#000" stroke-width="0.8" stroke-linejoin="round"><text x="0.00" font-style="italic">АБВ</text></g>
<g transform="matrix(1.0032 0 0 1 1150.50 487.10)" font-family="Liberation Serif,serif" font-size="40.85" stroke="#000" stroke-width="0.8" stroke-linejoin="round"><text x="0.00" font-style="italic">абв</text></g>
<g transform="matrix(0.9252 0 0 1 822.79 559.05)" font-family="Liberation Serif,serif" font-size="47.33" stroke="#000" stroke-width="0.5" stroke-linejoin="round"><text x="0.00" font-style="italic">Ваш</text></g>
<g transform="matrix(1.1775 0 0 1 926.58 559.05)" font-family="Liberation Serif,serif" font-size="37.87" stroke="#000" stroke-width="0.5" stroke-linejoin="round"><text x="0.00" font-style="italic">текст</text><rect x="3.79" y="-17.80" width="21.88" height="1.51"/><rect x="82.47" y="-17.80" width="21.88" height="1.51"/></g>
<g transform="matrix(1.0476 0 0 1 1075.76 559.05)" font-family="Liberation Serif,serif" font-size="47.33" stroke="#000" stroke-width="0.5" stroke-linejoin="round"><text x="0.00" font-style="italic">АБВ</text></g>
<g transform="matrix(1.1212 0 0 1 1186.39 559.05)" font-family="Liberation Serif,serif" font-size="37.87" stroke="#000" stroke-width="0.5" stroke-linejoin="round"><text x="0.00" font-style="italic">абв</text></g>
<g transform="matrix(0.7504 0 0 1 822.79 632.35)" font-family="Liberation Serif,serif" font-size="47.25" stroke="#000" stroke-width="0.3" stroke-linejoin="round"><text x="0.00" font-style="italic">Ваш</text></g>
<g transform="matrix(0.9048 0 0 1 909.39 632.35)" font-family="Liberation Serif,serif" font-size="39.26" stroke="#000" stroke-width="0.3" stroke-linejoin="round"><text x="0.00" font-style="italic">текст</text><rect x="3.93" y="-18.45" width="22.68" height="1.41"/><rect x="85.48" y="-18.45" width="22.68" height="1.41"/></g>
<g transform="matrix(0.8405 0 0 1 1034.60 632.35)" font-family="Liberation Serif,serif" font-size="47.25" stroke="#000" stroke-width="0.3" stroke-linejoin="round"><text x="0.00" font-style="italic">АБВ</text></g>
<g transform="matrix(0.8507 0 0 1 1124.39 632.35)" font-family="Liberation Serif,serif" font-size="39.26" stroke="#000" stroke-width="0.3" stroke-linejoin="round"><text x="0.00" font-style="italic">абв</text></g>
<g transform="matrix(0.9167 0 0 1 823.00 707.35)" font-family="Liberation Serif,serif" font-size="47.25" stroke="#000" stroke-width="0.3" stroke-linejoin="round"><text x="0.00" font-style="italic">Ваш</text></g>
<g transform="matrix(1.0466 0 0 1 919.70 707.35)" font-family="Liberation Serif,serif" font-size="41.91" stroke="#000" stroke-width="0.3" stroke-linejoin="round"><text transform="translate(0.00 0) skewX(-13)">т</text><text x="18.32" font-style="italic">екс</text><text transform="translate(73.54 0) skewX(-13)">т</text></g>
<g transform="matrix(1.0968 0 0 1 1037.93 707.35)" font-family="Liberation Serif,serif" font-size="47.25" stroke="#000" stroke-width="0.3" stroke-linejoin="round"><text x="0.00" font-style="italic">АБВ</text></g>
<g transform="matrix(1.0131 0 0 1 1149.39 707.35)" font-family="Liberation Serif,serif" font-size="41.91" stroke="#000" stroke-width="0.3" stroke-linejoin="round"><text x="0.00" font-style="italic">абв</text></g>
<g transform="matrix(0.9983 0 0 1 822.38 776.95)" font-family="Liberation Sans,sans-serif" font-size="45.64" stroke="#000" stroke-width="1.1" stroke-linejoin="round"><text x="0.00" font-style="italic">Ваш</text></g>
<g transform="matrix(1.1997 0 0 1 937.79 776.95)" font-family="Liberation Sans,sans-serif" font-size="37.34" stroke="#000" stroke-width="1.1" stroke-linejoin="round"><text x="0.00" font-style="italic">текст</text><rect x="3.73" y="-24.75" width="24.88" height="2.43"/><rect x="91.90" y="-24.75" width="24.88" height="2.43"/></g>
<g transform="matrix(1.0836 0 0 1 1104.17 776.95)" font-family="Liberation Sans,sans-serif" font-size="45.64" stroke="#000" stroke-width="1.1" stroke-linejoin="round"><text x="0.00" font-style="italic">АБВ</text></g>
<g transform="matrix(1.1766 0 0 1 1224.78 776.95)" font-family="Liberation Sans,sans-serif" font-size="37.34" stroke="#000" stroke-width="1.1" stroke-linejoin="round"><text x="0.00" font-style="italic">абв</text></g>
<g transform="translate(0 0)"><path d="M882.500 784q9.500-5.500 19.500-.5" fill="none" stroke="#000" stroke-width="3" stroke-linecap="round"/></g>
</svg>
<div style="position:absolute;left:823.3px;top:278px;font:13px/15px 'Liberation Sans',sans-serif;color:#000;white-space:pre"><span style="letter-spacing:-0.025px">101! Rocket Ride </span><span style="letter-spacing:-0.305px">Шрифт-№:1) </span><span style="letter-spacing:-0.085px">Путь:</span></div>
<div style="position:absolute;left:823.3px;top:351.25px;font:13px/15px 'Liberation Sans',sans-serif;color:#000;white-space:pre"><span style="letter-spacing:-0.025px">612KosheyPL </span><span style="letter-spacing:-0.305px">Шрифт-№:2) </span><span style="letter-spacing:-0.085px">Путь:</span><span style="letter-spacing:0.125px">C:\Windows\Fonts\</span><span style="letter-spacing:-0.045px">612KosheyPL-Bold+186252.ttf</span></div>
<div style="position:absolute;left:823.3px;top:423.75px;font:13px/15px 'Liberation Sans',sans-serif;color:#000;white-space:pre"><span style="letter-spacing:-0.025px">A La Russ </span><span style="letter-spacing:-0.305px">Шрифт-№:3) </span><span style="letter-spacing:-0.085px">Путь:</span><span style="letter-spacing:0.125px">C:\Windows\Fonts\</span><span style="letter-spacing:-0.045px">A La Russ++++.TTF</span></div>
<div style="position:absolute;left:823.3px;top:496.75px;font:13px/15px 'Liberation Sans',sans-serif;color:#000;white-space:pre"><span style="letter-spacing:-0.025px">Academia </span><span style="letter-spacing:-0.305px">Шрифт-№:4) </span><span style="letter-spacing:-0.085px">Путь:</span><span style="letter-spacing:0.125px">C:\Windows\Fonts\</span><span style="letter-spacing:-0.045px">Academia Bold+41066.TTF</span></div>
<div style="position:absolute;left:823.3px;top:569.25px;font:13px/15px 'Liberation Sans',sans-serif;color:#000;white-space:pre"><span style="letter-spacing:-0.025px">Academy Old </span><span style="letter-spacing:-0.305px">Шрифт-№:5) </span><span style="letter-spacing:-0.085px">Путь:</span><span style="letter-spacing:0.125px">C:\Windows\Fonts\</span><span style="letter-spacing:-0.045px">Academy Old+69376.ttf</span></div>
<div style="position:absolute;left:823.3px;top:642.5px;font:13px/15px 'Liberation Sans',sans-serif;color:#000;white-space:pre"><span style="letter-spacing:-0.025px">Academy Old Narrow </span><span style="letter-spacing:-0.305px">Шрифт-№:6) </span><span style="letter-spacing:-0.085px">Путь:</span><span style="letter-spacing:0.125px">C:\Windows\Fonts\</span><span style="letter-spacing:-0.045px">Academy Old Narrow+61152.ttf</span></div>
<div style="position:absolute;left:823.3px;top:715.5px;font:13px/15px 'Liberation Sans',sans-serif;color:#000;white-space:pre"><span style="letter-spacing:-0.025px">AcademyCyr </span><span style="letter-spacing:-0.305px">Шрифт-№:7) </span><span style="letter-spacing:-0.085px">Путь:</span><span style="letter-spacing:0.125px">C:\Windows\Fonts\</span><span style="letter-spacing:-0.045px">Academspets-Regular.ttf</span></div>
<div style="position:absolute;left:823.3px;top:788.5px;font:13px/15px 'Liberation Sans',sans-serif;color:#000;white-space:pre"><span style="letter-spacing:-0.025px">Akbar Cyrillic </span><span style="letter-spacing:-0.305px">Шрифт-№:8) </span><span style="letter-spacing:-0.085px">Путь:</span><span style="letter-spacing:0.125px">C:\Windows\Fonts\</span><span style="letter-spacing:-0.045px">Akbar Cyrillic+86304.ttf</span></div>
<div style="position:absolute;left:172px;top:47px;width:576px;height:505px;box-sizing:border-box;background:#f0f0f0;border-left:1px solid #a4a4a4;border-top:1px solid #a4a4a4;box-shadow:2.500px 2.500px 1.400px rgba(0,0,0,.46);"></div>
<div style="position:absolute;left:462px;top:50px;width:1px;height:499px;box-sizing:border-box;background:#a0a0a0;"></div>
<div style="position:absolute;left:469px;top:55px;width:273px;height:1px;box-sizing:border-box;background:#a6a6a6;"></div>
<div style="position:absolute;left:469px;top:485px;width:273px;height:1px;box-sizing:border-box;background:#a6a6a6;"></div>
<div style="position:absolute;left:198.8px;top:53.2px;font:normal normal 12px/14px 'Liberation Sans',sans-serif;color:#000;white-space:pre;letter-spacing:-0.295px;">German</div>
<div style="position:absolute;right:1159.6px;top:53.2px;font:normal normal 12px/14px 'Liberation Sans',sans-serif;color:#000;white-space:pre;letter-spacing:-0.845px;">100%</div>
<div style="position:absolute;right:1193.7px;top:53.2px;font:normal normal 12px/14px 'Liberation Sans',sans-serif;color:#000;white-space:pre;letter-spacing:-0.245px;">Deutsch</div>
<div style="position:absolute;left:198.8px;top:73.2px;font:normal normal 12px/14px 'Liberation Sans',sans-serif;color:#000;white-space:pre;letter-spacing:-0.295px;">Englisch</div>
<div style="position:absolute;right:1159.6px;top:73.2px;font:normal normal 12px/14px 'Liberation Sans',sans-serif;color:#000;white-space:pre;letter-spacing:-0.845px;">100%</div>
<div style="position:absolute;right:1193.7px;top:73.2px;font:normal normal 12px/14px 'Liberation Sans',sans-serif;color:#000;white-space:pre;letter-spacing:-0.245px;">English</div>
<div style="position:absolute;left:198.8px;top:93.2px;font:normal normal 12px/14px 'Liberation Sans',sans-serif;color:#000;white-space:pre;letter-spacing:-0.295px;">French-Canada</div>
<div style="position:absolute;right:1159.6px;top:93.2px;font:normal normal 12px/14px 'Liberation Sans',sans-serif;color:#000;white-space:pre;letter-spacing:-0.845px;">48%</div>
<div style="position:absolute;right:1188.1px;top:93.2px;font:normal normal 12px/14px 'Liberation Sans',sans-serif;color:#000;white-space:pre;letter-spacing:-0.245px;">Française</div>
<div style="position:absolute;left:198.8px;top:113.2px;font:normal normal 12px/14px 'Liberation Sans',sans-serif;color:#000;white-space:pre;letter-spacing:-0.295px;">Dutch</div>
<div style="position:absolute;right:1159.6px;top:113.2px;font:normal normal 12px/14px 'Liberation Sans',sans-serif;color:#000;white-space:pre;letter-spacing:-0.845px;">100%</div>
<div style="position:absolute;right:1193.7px;top:113.2px;font:normal normal 12px/14px 'Liberation Sans',sans-serif;color:#000;white-space:pre;letter-spacing:-0.245px;">Nederlands (Fred)</div>
<div style="position:absolute;left:198.8px;top:133.2px;font:normal normal 12px/14px 'Liberation Sans',sans-serif;color:#000;white-space:pre;letter-spacing:-0.295px;">Dutch</div>
<div style="position:absolute;right:1159.6px;top:133.2px;font:normal normal 12px/14px 'Liberation Sans',sans-serif;color:#000;white-space:pre;letter-spacing:-0.845px;">100%</div>
<div style="position:absolute;right:1193.7px;top:133.2px;font:normal normal 12px/14px 'Liberation Sans',sans-serif;color:#000;white-space:pre;letter-spacing:-0.245px;">Nederlands (John)</div>
<div style="position:absolute;left:198.8px;top:153.2px;font:normal normal 12px/14px 'Liberation Sans',sans-serif;color:#000;white-space:pre;letter-spacing:-0.295px;">Arabic</div>
<div style="position:absolute;right:1159.6px;top:153.2px;font:normal normal 12px/14px 'Liberation Sans',sans-serif;color:#000;white-space:pre;letter-spacing:-0.245px;">34 %</div>
<svg style="left:382.09999999999997px;top:153.2px" width="32" height="16" viewBox="0 0 32 16" preserveAspectRatio="none" fill="none" stroke="#000" stroke-width="1.150" stroke-linecap="round"><path d="M30.800 2.200V11M27.800 2.200V9.600Q27.800 11 26.200 11H21.400M24.800 11Q21.800 10.600 22.400 8.200Q23 6.600 24.800 7.400M20.600 8Q21.600 12.400 17.600 14.200M17 8V9.600Q17 11 15.600 11H10M13.400 8.400V11M10 11Q7.600 11 8 8.600Q8.200 7 6.600 7.200Q4.400 7.800 4.800 9.600Q5.400 11.200 7.600 10.600Q9 10 8.400 8.400"/><path d="M15 13.800h.1M11.400 13.800h.1M13 13.800h.1M5.600 4.600h.1M7.600 4.600h.1" stroke-width="1.500"/></svg>
<div style="position:absolute;left:198.8px;top:173.2px;font:normal normal 12px/14px 'Liberation Sans',sans-serif;color:#000;white-space:pre;letter-spacing:-0.295px;">Spanish</div>
<div style="position:absolute;right:1159.6px;top:173.2px;font:normal normal 12px/14px 'Liberation Sans',sans-serif;color:#000;white-space:pre;letter-spacing:-0.845px;">100%</div>
<div style="position:absolute;right:1193.7px;top:173.2px;font:normal normal 12px/14px 'Liberation Sans',sans-serif;color:#000;white-space:pre;letter-spacing:-0.245px;">Español</div>
<div style="position:absolute;left:198.8px;top:193.2px;font:normal normal 12px/14px 'Liberation Sans',sans-serif;color:#000;white-space:pre;letter-spacing:-0.295px;">Serbian</div>
<div style="position:absolute;right:1159.6px;top:193.2px;font:normal normal 12px/14px 'Liberation Sans',sans-serif;color:#000;white-space:pre;letter-spacing:-0.845px;">44%</div>
<div style="position:absolute;right:1188.1px;top:193.2px;font:normal normal 12px/14px 'Liberation Sans',sans-serif;color:#000;white-space:pre;letter-spacing:-0.245px;">Српски</div>
<div style="position:absolute;left:198.8px;top:213.2px;font:normal normal 12px/14px 'Liberation Sans',sans-serif;color:#000;white-space:pre;letter-spacing:-0.295px;">Romanian</div>
<div style="position:absolute;right:1159.6px;top:213.2px;font:normal normal 12px/14px 'Liberation Sans',sans-serif;color:#000;white-space:pre;letter-spacing:-0.845px;">34%</div>
<div style="position:absolute;right:1188.1px;top:213.2px;font:normal normal 12px/14px 'Liberation Sans',sans-serif;color:#000;white-space:pre;letter-spacing:-0.245px;">Română</div>
<div style="position:absolute;left:198.8px;top:233.2px;font:normal normal 12px/14px 'Liberation Sans',sans-serif;color:#000;white-space:pre;letter-spacing:-0.295px;">Swedish</div>
<div style="position:absolute;right:1159.6px;top:233.2px;font:normal normal 12px/14px 'Liberation Sans',sans-serif;color:#000;white-space:pre;letter-spacing:-0.845px;">46%</div>
<div style="position:absolute;right:1188.1px;top:233.2px;font:normal normal 12px/14px 'Liberation Sans',sans-serif;color:#000;white-space:pre;letter-spacing:-0.245px;">Svenska</div>
<div style="position:absolute;left:198.8px;top:253.2px;font:normal normal 12px/14px 'Liberation Sans',sans-serif;color:#9d9d9d;white-space:pre;letter-spacing:-0.295px;">Russian</div>
<div style="position:absolute;right:1159.6px;top:253.2px;font:normal normal 12px/14px 'Liberation Sans',sans-serif;color:#9d9d9d;white-space:pre;letter-spacing:-0.845px;">98%</div>
<div style="position:absolute;right:1188.1px;top:253.2px;font:normal normal 12px/14px 'Liberation Sans',sans-serif;color:#9d9d9d;white-space:pre;letter-spacing:-0.245px;">Русский</div>
<div style="position:absolute;left:198.8px;top:273.2px;font:normal normal 12px/14px 'Liberation Sans',sans-serif;color:#000;white-space:pre;letter-spacing:-0.295px;">Polish</div>
<div style="position:absolute;right:1159.6px;top:273.2px;font:normal normal 12px/14px 'Liberation Sans',sans-serif;color:#000;white-space:pre;letter-spacing:-0.845px;">100%</div>
<div style="position:absolute;right:1193.7px;top:273.2px;font:normal normal 12px/14px 'Liberation Sans',sans-serif;color:#000;white-space:pre;letter-spacing:-0.245px;">Polski</div>
<div style="position:absolute;left:198.8px;top:293.2px;font:normal normal 12px/14px 'Liberation Sans',sans-serif;color:#000;white-space:pre;letter-spacing:-0.295px;">Italian</div>
<div style="position:absolute;right:1159.6px;top:293.2px;font:normal normal 12px/14px 'Liberation Sans',sans-serif;color:#000;white-space:pre;letter-spacing:-0.845px;">100%</div>
<div style="position:absolute;right:1193.7px;top:293.2px;font:normal normal 12px/14px 'Liberation Sans',sans-serif;color:#000;white-space:pre;letter-spacing:-0.245px;">Italiano</div>
<div style="position:absolute;left:198.8px;top:313.2px;font:normal normal 12px/14px 'Liberation Sans',sans-serif;color:#000;white-space:pre;letter-spacing:-0.295px;">Greek</div>
<div style="position:absolute;right:1159.6px;top:313.2px;font:normal normal 12px/14px 'Liberation Sans',sans-serif;color:#000;white-space:pre;letter-spacing:-0.845px;">98%</div>
<div style="position:absolute;right:1188.1px;top:313.2px;font:normal normal 12px/14px 'Liberation Sans',sans-serif;color:#000;white-space:pre;letter-spacing:-0.245px;">Ελληνικά</div>
<div style="position:absolute;left:198.8px;top:333.2px;font:normal normal 12px/14px 'Liberation Sans',sans-serif;color:#000;white-space:pre;letter-spacing:-0.295px;">Chinese-Simplified</div>
<div style="position:absolute;right:1159.6px;top:333.2px;font:normal normal 12px/14px 'Liberation Sans',sans-serif;color:#000;white-space:pre;letter-spacing:-0.845px;">48%</div>
<svg style="left:351.7px;top:333.7px" width="62.4" height="13" viewBox="0 0 72 13" preserveAspectRatio="none" fill="none" stroke="#000" stroke-width="1.120"><path transform="translate(0 0)" d="M2 3.500h8v5h-8zM6 .8v11.700"/><path transform="translate(12 0)" d="M6 .8v2M1 3.300h10M3 4l6.500 8.300M9 4l-7 8.300"/><path transform="translate(24 0)" d="M9 .6q-3.200 5.600 0 11.800"/><path transform="translate(36 0)" d="M1.200 2.500l1.600-1.700M1.600 1.800h3.400M6.800 2.500l1.600-1.700M7.200 1.800h3.600M1.500 4.300v8.200M1.500 4.300h9v7.200q0 1-1.400.8M4 6.500h4v3.600h-4zM4 8.200h4"/><path transform="translate(48 0)" d="M3.400 .8l-2.600 5.400M2.400 3.800v8.700M4.400 3.800h7M7.800 .8v11.700M7.800 4l-3.600 5.700M7.800 4l3.600 5.700M6 9.800h3.600"/><path transform="translate(60 0)" d="M3 .6q3.200 5.600 0 11.800"/></svg>
<div style="position:absolute;left:198.8px;top:353.2px;font:normal normal 12px/14px 'Liberation Sans',sans-serif;color:#000;white-space:pre;letter-spacing:-0.295px;">Brazil</div>
<div style="position:absolute;right:1159.6px;top:353.2px;font:normal normal 12px/14px 'Liberation Sans',sans-serif;color:#000;white-space:pre;letter-spacing:-0.845px;">100%</div>
<div style="position:absolute;right:1193.7px;top:353.2px;font:normal normal 12px/14px 'Liberation Sans',sans-serif;color:#000;white-space:pre;letter-spacing:-0.245px;">Portuguese</div>
<div style="position:absolute;left:198.8px;top:373.2px;font:normal normal 12px/14px 'Liberation Sans',sans-serif;color:#000;white-space:pre;letter-spacing:-0.295px;">Portugal</div>
<div style="position:absolute;right:1159.6px;top:373.2px;font:normal normal 12px/14px 'Liberation Sans',sans-serif;color:#000;white-space:pre;letter-spacing:-0.845px;">34%</div>
<div style="position:absolute;right:1188.1px;top:373.2px;font:normal normal 12px/14px 'Liberation Sans',sans-serif;color:#000;white-space:pre;letter-spacing:-0.245px;">Português</div>
<div style="position:absolute;left:198.8px;top:393.2px;font:normal normal 12px/14px 'Liberation Sans',sans-serif;color:#000;white-space:pre;letter-spacing:-0.295px;">Traditional-Chinese</div>
<div style="position:absolute;right:1159.6px;top:393.2px;font:normal normal 12px/14px 'Liberation Sans',sans-serif;color:#000;white-space:pre;letter-spacing:-0.845px;">100%</div>
<svg style="left:320.09999999999997px;top:393.7px" width="88.0" height="13" viewBox="0 0 96 13" preserveAspectRatio="none" fill="none" stroke="#000" stroke-width="1.120"><path transform="translate(0 0)" d="M2 3.500h8v5h-8zM6 .8v11.700"/><path transform="translate(12 0)" d="M1.500 1.500h9v10.500h-9zM3 3.800h6M3.500 5.500h3v2.400h-3zM3 10h6M7.800 3l1.200 5.600"/><path transform="translate(24 0)" d="M3.400 .8l-2.600 5.400M2.400 3.800v8.700M4.500 2.300h6.800M5.400 4h5.200v3.400h-5.200zM7.900 .8v6.600M4.400 9h7.200M9.300 7.600v4q0 1-1.500.6M6 10l1 1.200"/><path transform="translate(36 0)" d="M2.600 .8l-1.600 2.700h2l-2.200 3 2.600-.3M2.400 6.500v6M.8 9.500l-.3 1.800M4 9.500l.3 1.600M5.300 2.300h6.200M8.300 .6v1.700M8 2.500l-2 3.100h4.600M9.400 4.400l1.600 2M7.200 6.800q0 4-2.200 5.600M9.300 6.800v4.600q0 .8 1 .8h1.200"/><path transform="translate(48 0)" d="M9 .6q-3.200 5.600 0 11.800"/><path transform="translate(60 0)" d="M6.500 .8l-3.800 4.600h7.600M8.400 3.300l2.400 2.600M2.500 7.500h7v4.500h-7z"/><path transform="translate(72 0)" d="M1.400 1.400l1.400 1.200M.6 4.500l1.500 1.100M.8 12l2-4.200M4.500 1.500h2.200M9 1.500h2.400M7.800 .6l-.7 2.500 1.800.4M4.200 4.500h7.400M5 6.300h5.500v2h-5.500v2.200h6v1q0 1-1.400.8"/><path transform="translate(84 0)" d="M3 .6q3.200 5.600 0 11.800"/></svg>
<div style="position:absolute;left:198.8px;top:413.2px;font:normal normal 12px/14px 'Liberation Sans',sans-serif;color:#000;white-space:pre;letter-spacing:-0.295px;">Romanian-2</div>
<div style="position:absolute;right:1159.6px;top:413.2px;font:normal normal 12px/14px 'Liberation Sans',sans-serif;color:#000;white-space:pre;letter-spacing:-0.845px;">44%</div>
<div style="position:absolute;right:1188.1px;top:413.2px;font:normal normal 12px/14px 'Liberation Sans',sans-serif;color:#000;white-space:pre;letter-spacing:-0.245px;">Română</div>
<div style="position:absolute;left:198.8px;top:433.2px;font:normal normal 12px/14px 'Liberation Sans',sans-serif;color:#000;white-space:pre;letter-spacing:-0.295px;">Hungarian</div>
<div style="position:absolute;right:1159.6px;top:433.2px;font:normal normal 12px/14px 'Liberation Sans',sans-serif;color:#000;white-space:pre;letter-spacing:-0.845px;">100%</div>
<div style="position:absolute;right:1193.7px;top:433.2px;font:normal normal 12px/14px 'Liberation Sans',sans-serif;color:#000;white-space:pre;letter-spacing:-0.245px;">Magyar</div>
<div style="position:absolute;left:198.8px;top:453.2px;font:normal normal 12px/14px 'Liberation Sans',sans-serif;color:#000;white-space:pre;letter-spacing:-0.295px;">Thai</div>
<div style="position:absolute;right:1159.6px;top:453.2px;font:normal normal 12px/14px 'Liberation Sans',sans-serif;color:#000;white-space:pre;letter-spacing:-0.845px;">44%</div>
<svg style="left:356.8px;top:452.4px" width="55.4" height="13" viewBox="0 0 84 13" preserveAspectRatio="none" fill="none" stroke="#000" stroke-width="1.120"><path transform="translate(0 0)" d="M1.800 1.200h7.700v10.600h-7.700z"/><path transform="translate(12 0)" d="M1.800 1.200h7.700v10.600h-7.700z"/><path transform="translate(24 0)" d="M1.800 1.200h7.700v10.600h-7.700z"/><path transform="translate(36 0)" d="M1.800 1.200h7.700v10.600h-7.700z"/><path transform="translate(48 0)" d="M1.800 1.200h7.700v10.600h-7.700z"/><path transform="translate(60 0)" d="M1.800 1.200h7.700v10.600h-7.700z"/><path transform="translate(72 0)" d="M1.800 1.200h7.700v10.600h-7.700z"/></svg>
<div style="position:absolute;left:198.8px;top:473.2px;font:normal normal 12px/14px 'Liberation Sans',sans-serif;color:#000;white-space:pre;letter-spacing:-0.295px;">Slovak</div>
<div style="position:absolute;right:1159.6px;top:473.2px;font:normal normal 12px/14px 'Liberation Sans',sans-serif;color:#000;white-space:pre;letter-spacing:-0.845px;">44%</div>
<div style="position:absolute;right:1188.1px;top:473.2px;font:normal normal 12px/14px 'Liberation Sans',sans-serif;color:#000;white-space:pre;letter-spacing:-0.245px;">Slovenčiny</div>
<div style="position:absolute;left:198.8px;top:493.2px;font:normal normal 12px/14px 'Liberation Sans',sans-serif;color:#000;white-space:pre;letter-spacing:-0.295px;">Czech</div>
<div style="position:absolute;right:1159.6px;top:493.2px;font:normal normal 12px/14px 'Liberation Sans',sans-serif;color:#000;white-space:pre;letter-spacing:-0.845px;">44%</div>
<div style="position:absolute;right:1188.1px;top:493.2px;font:normal normal 12px/14px 'Liberation Sans',sans-serif;color:#000;white-space:pre;letter-spacing:-0.245px;">Česky</div>
<div style="position:absolute;left:198.8px;top:513.2px;font:normal normal 12px/14px 'Liberation Sans',sans-serif;color:#000;white-space:pre;letter-spacing:-0.295px;">Sinhala</div>
<div style="position:absolute;right:1159.6px;top:513.2px;font:normal normal 12px/14px 'Liberation Sans',sans-serif;color:#000;white-space:pre;letter-spacing:-0.845px;">44%</div>
<svg style="left:387.7px;top:515.2px" width="24" height="12" viewBox="0 0 26 12" preserveAspectRatio="none" fill="none" stroke="#000" stroke-width="1.050"><path d="M4.500 5.500a1.500 1.500 0 1 1-1.600 1.700q-2.200.4-2-1.800 .6-2.800 4-2.400 3 .6 2.600 3.400-.4 2-2.800 2M9.300 3.600a1.300 1.300 0 1 0 .01 0M15 7.500q-2.400.2-2.200-1.800 .4-2.200 2.800-2 2.400.4 2.200 2.600-.2 1.800-1.800 2M13.500 5.500h2.400M24.500 4q-1.600-1.600-3.600-.4-1.800 1.600-.8 4 1.400 2.200 3.800 1.400 1.800-.8 1.600-2.800h-2.200"/></svg>
<div style="position:absolute;left:198.8px;top:533.2px;font:normal normal 12px/14px 'Liberation Sans',sans-serif;color:#000;white-space:pre;letter-spacing:-0.295px;">Finnish</div>
<div style="position:absolute;right:1159.6px;top:533.2px;font:normal normal 12px/14px 'Liberation Sans',sans-serif;color:#000;white-space:pre;letter-spacing:-0.845px;">44%</div>
<div style="position:absolute;right:1188.1px;top:533.2px;font:normal normal 12px/14px 'Liberation Sans',sans-serif;color:#000;white-space:pre;letter-spacing:-0.245px;">Suomi</div>
<div style="position:absolute;left:488.6px;top:63.2px;font:normal normal 12px/14px 'Liberation Sans',sans-serif;color:#000;white-space:pre;letter-spacing:-0.295px;">Vietnamese</div>
<div style="position:absolute;right:875.1px;top:63.2px;font:normal normal 12px/14px 'Liberation Sans',sans-serif;color:#000;white-space:pre;letter-spacing:-0.845px;">44%</div>
<div style="position:absolute;right:903.6px;top:63.2px;font:normal normal 12px/14px 'Liberation Sans',sans-serif;color:#000;white-space:pre;letter-spacing:-0.245px;">Tiếng Việt</div>
<div style="position:absolute;left:488.6px;top:83.2px;font:normal normal 12px/14px 'Liberation Sans',sans-serif;color:#000;white-space:pre;letter-spacing:-0.295px;">Indonesian</div>
<div style="position:absolute;right:875.1px;top:83.2px;font:normal normal 12px/14px 'Liberation Sans',sans-serif;color:#000;white-space:pre;letter-spacing:-0.845px;">44%</div>
<div style="position:absolute;right:903.6px;top:83.2px;font:normal normal 12px/14px 'Liberation Sans',sans-serif;color:#000;white-space:pre;letter-spacing:-0.245px;">Indonesia</div>
<div style="position:absolute;left:488.6px;top:103.2px;font:normal normal 12px/14px 'Liberation Sans',sans-serif;color:#000;white-space:pre;letter-spacing:-0.295px;">Turkish</div>
<div style="position:absolute;right:875.1px;top:103.2px;font:normal normal 12px/14px 'Liberation Sans',sans-serif;color:#000;white-space:pre;letter-spacing:-0.845px;">100%</div>
<div style="position:absolute;right:909.1999999999999px;top:103.2px;font:normal normal 12px/14px 'Liberation Sans',sans-serif;color:#000;white-space:pre;letter-spacing:-0.245px;">Türkçe</div>
<div style="position:absolute;left:488.6px;top:123.19999999999999px;font:normal normal 12px/14px 'Liberation Sans',sans-serif;color:#000;white-space:pre;letter-spacing:-0.295px;">Persian</div>
<div style="position:absolute;right:875.1px;top:123.19999999999999px;font:normal normal 12px/14px 'Liberation Sans',sans-serif;color:#000;white-space:pre;letter-spacing:-0.245px;">46 %</div>
<svg style="left:670.4px;top:123.19999999999999px" width="29.5" height="17" viewBox="0 0 30 17" preserveAspectRatio="none" fill="none" stroke="#000" stroke-width="1.050" stroke-linecap="round"><path d="M29 10.800h-3q.6-2.800-.8-3.600-1.500.2-1.300 1.800 .2 1.600 2.100 1.800M22.600 10.800h-1.500v-8M19 7.400q.8 2 .2 4.400-.8 2-2.400 2.200M16.500 10.800q-1 .3-1.400-1.600-.4 2-1.600 1.600-.8.200-1.200-1.600-.6 2-1.600 1.600h-1.200q.4 3.400-3 3.600-3.600.2-4.300-1.600-.6-1.600.6-3.200"/><path d="M24.800 4.700h.1M4 15.800h.1M6.200 15.800h.1" stroke-width="1.500"/></svg>
<div style="position:absolute;left:488.6px;top:143.2px;font:normal normal 12px/14px 'Liberation Sans',sans-serif;color:#000;white-space:pre;letter-spacing:-0.295px;">Japanese</div>
<div style="position:absolute;right:875.1px;top:143.2px;font:normal normal 12px/14px 'Liberation Sans',sans-serif;color:#000;white-space:pre;letter-spacing:-0.845px;">48%</div>
<svg style="left:661.5999999999999px;top:142.89999999999998px" width="34.5" height="13" viewBox="0 0 36 13" preserveAspectRatio="none" fill="none" stroke="#000" stroke-width="1.120"><path transform="translate(0 0)" d="M2.500 1.500h7v10.500h-7zM2.500 6.500h7"/><path transform="translate(12 0)" d="M1 4h10M6 .8v11.700M6 4.200l-4.600 6.300M6 4.200l4.600 6.300M3.500 9.500h5"/><path transform="translate(24 0)" d="M.8 2h3.600M.4 4.200h4.400M1 6.300h3.200M1 8.600h3.200v3.400h-3.200zM5.800 1.500h5.600M8.600 1.500l-.6 3h2.600v3.300M5.600 5h6M6.800 8.800h4v3.300h-4z"/></svg>
<div style="position:absolute;left:488.6px;top:163.2px;font:normal normal 12px/14px 'Liberation Sans',sans-serif;color:#000;white-space:pre;letter-spacing:-0.295px;">Hindi</div>
<div style="position:absolute;right:875.1px;top:163.2px;font:normal normal 12px/14px 'Liberation Sans',sans-serif;color:#000;white-space:pre;letter-spacing:-0.845px;">48%</div>
<svg style="left:672.5999999999999px;top:163.39999999999998px" width="23" height="13" viewBox="0 0 24 15" preserveAspectRatio="none" fill="none" stroke="#000" stroke-width="1.150"><path d="M.5 4.500h23M3 4.500v8M3 3.800q.4-3.400 4.500-3 2.600.4 2.400 3.600M9.800 4.500v8M9.800 8.500h-2.600q-2.200-.2-2 1.800M12 4.500v4.500M12 7.500q3 .2 3.200 2.400M15 9.500l-2.600 2.500M17.500 4.500q-1 2.400.8 3.500-2.400.6-1.600 2.600.8 1.600 2.600 1.400M21.500 12.500v-8M21.500 3.800q.2-3 -2.400-3.200"/></svg>
<div style="position:absolute;left:488.6px;top:183.2px;font:normal normal 12px/14px 'Liberation Sans',sans-serif;color:#000;white-space:pre;letter-spacing:-0.295px;">Korean</div>
<div style="position:absolute;right:875.1px;top:183.2px;font:normal normal 12px/14px 'Liberation Sans',sans-serif;color:#000;white-space:pre;letter-spacing:-0.845px;">100%</div>
<svg style="left:655.0px;top:183.2px" width="34" height="14" viewBox="0 0 34 14" preserveAspectRatio="none" fill="none" stroke="#000" stroke-width="1.050"><path d="M1 2.300h6M4 .6v1.700M4 3.600a2.200 1.900 0 1 0 .01 0M9 .6v9M9 4.800h2M2 9.200v3.600h7.500M13.500 1.200h6.500v4M12.500 6.200h9M17 6.200v2.600M13.800 8.800h6.200v3.800M26.500 3a2.700 4 0 1 0 .01 0M29.300 6.500h3M32.300 .6v12.600"/></svg>
<div style="position:absolute;left:488.6px;top:203.2px;font:normal normal 12px/14px 'Liberation Sans',sans-serif;color:#000;white-space:pre;letter-spacing:-0.295px;">French</div>
<div style="position:absolute;right:875.1px;top:203.2px;font:normal normal 12px/14px 'Liberation Sans',sans-serif;color:#000;white-space:pre;letter-spacing:-0.845px;">100%</div>
<div style="position:absolute;right:909.1999999999999px;top:203.2px;font:normal normal 12px/14px 'Liberation Sans',sans-serif;color:#000;white-space:pre;letter-spacing:-0.245px;">Française</div>
<div style="position:absolute;left:488.6px;top:223.2px;font:normal normal 12px/14px 'Liberation Sans',sans-serif;color:#000;white-space:pre;letter-spacing:-0.295px;">Slovenian</div>
<div style="position:absolute;right:875.1px;top:223.2px;font:normal normal 12px/14px 'Liberation Sans',sans-serif;color:#000;white-space:pre;letter-spacing:-0.845px;">100%</div>
<div style="position:absolute;right:909.1999999999999px;top:223.2px;font:normal normal 12px/14px 'Liberation Sans',sans-serif;color:#000;white-space:pre;letter-spacing:-0.245px;">Slovenšèina</div>
<div style="position:absolute;left:488.6px;top:243.2px;font:normal normal 12px/14px 'Liberation Sans',sans-serif;color:#000;white-space:pre;letter-spacing:-0.295px;">Catalan</div>
<div style="position:absolute;right:875.1px;top:243.2px;font:normal normal 12px/14px 'Liberation Sans',sans-serif;color:#000;white-space:pre;letter-spacing:-0.845px;">100%</div>
<div style="position:absolute;right:909.1999999999999px;top:243.2px;font:normal normal 12px/14px 'Liberation Sans',sans-serif;color:#000;white-space:pre;letter-spacing:-0.245px;">Català</div>
<div style="position:absolute;left:488.6px;top:263.2px;font:normal normal 12px/14px 'Liberation Sans',sans-serif;color:#000;white-space:pre;letter-spacing:-0.295px;">Hebrew</div>
<div style="position:absolute;right:878.5px;top:263.2px;font:normal normal 12px/14px 'Liberation Sans',sans-serif;color:#000;white-space:pre;letter-spacing:-0.845px;">100%</div>
<div style="position:absolute;right:905.5px;top:263.2px;font:normal normal 12px/14px 'Liberation Sans',sans-serif;color:#000;white-space:pre;letter-spacing:-0.045px;direction:rtl;unicode-bidi:isolate;">עברית</div>
<div style="position:absolute;left:488.6px;top:283.2px;font:normal normal 12px/14px 'Liberation Sans',sans-serif;color:#000;white-space:pre;letter-spacing:-0.295px;">Afrikaans</div>
<div style="position:absolute;right:875.1px;top:283.2px;font:normal normal 12px/14px 'Liberation Sans',sans-serif;color:#000;white-space:pre;letter-spacing:-0.845px;">100%</div>
<div style="position:absolute;right:909.1999999999999px;top:283.2px;font:normal normal 12px/14px 'Liberation Sans',sans-serif;color:#000;white-space:pre;letter-spacing:-0.245px;">South-Africa</div>
<div style="position:absolute;left:488.6px;top:303.2px;font:normal normal 12px/14px 'Liberation Sans',sans-serif;color:#000;white-space:pre;letter-spacing:-0.295px;">Welsh</div>
<div style="position:absolute;right:875.1px;top:303.2px;font:normal normal 12px/14px 'Liberation Sans',sans-serif;color:#000;white-space:pre;letter-spacing:-0.845px;">100%</div>
<div style="position:absolute;right:909.1999999999999px;top:303.2px;font:normal normal 12px/14px 'Liberation Sans',sans-serif;color:#000;white-space:pre;letter-spacing:-0.245px;">United Kingdom</div>
<div style="position:absolute;left:488.6px;top:323.2px;font:normal normal 12px/14px 'Liberation Sans',sans-serif;color:#000;white-space:pre;letter-spacing:-0.295px;">Spanish-VE</div>
<div style="position:absolute;right:875.1px;top:323.2px;font:normal normal 12px/14px 'Liberation Sans',sans-serif;color:#000;white-space:pre;letter-spacing:-0.845px;">100%</div>
<div style="position:absolute;right:909.1999999999999px;top:323.2px;font:normal normal 12px/14px 'Liberation Sans',sans-serif;color:#000;white-space:pre;letter-spacing:-0.245px;">Venezuela</div>
<div style="position:absolute;left:488.6px;top:343.2px;font:normal normal 12px/14px 'Liberation Sans',sans-serif;color:#000;white-space:pre;letter-spacing:-0.295px;">Malay</div>
<div style="position:absolute;right:875.1px;top:343.2px;font:normal normal 12px/14px 'Liberation Sans',sans-serif;color:#000;white-space:pre;letter-spacing:-0.845px;">100%</div>
<div style="position:absolute;right:909.1999999999999px;top:343.2px;font:normal normal 12px/14px 'Liberation Sans',sans-serif;color:#000;white-space:pre;letter-spacing:-0.245px;">Malaysia</div>
<div style="position:absolute;left:488.6px;top:363.2px;font:normal normal 12px/14px 'Liberation Sans',sans-serif;color:#000;white-space:pre;letter-spacing:-0.295px;">Filipino</div>
<div style="position:absolute;right:875.1px;top:363.2px;font:normal normal 12px/14px 'Liberation Sans',sans-serif;color:#000;white-space:pre;letter-spacing:-0.845px;">100%</div>
<div style="position:absolute;right:909.1999999999999px;top:363.2px;font:normal normal 12px/14px 'Liberation Sans',sans-serif;color:#000;white-space:pre;letter-spacing:-0.245px;">Pilipino</div>
<div style="position:absolute;left:488.6px;top:383.2px;font:normal normal 12px/14px 'Liberation Sans',sans-serif;color:#000;white-space:pre;letter-spacing:-0.295px;">Bosnian</div>
<div style="position:absolute;right:875.1px;top:383.2px;font:normal normal 12px/14px 'Liberation Sans',sans-serif;color:#000;white-space:pre;letter-spacing:-0.845px;">100%</div>
<div style="position:absolute;right:909.1999999999999px;top:383.2px;font:normal normal 12px/14px 'Liberation Sans',sans-serif;color:#000;white-space:pre;letter-spacing:-0.245px;">Bosanski / Hrvatski / Srpski</div>
<div style="position:absolute;left:488.6px;top:403.2px;font:normal normal 12px/14px 'Liberation Sans',sans-serif;color:#000;white-space:pre;letter-spacing:-0.295px;">Ukrainian</div>
<div style="position:absolute;right:875.1px;top:403.2px;font:normal normal 12px/14px 'Liberation Sans',sans-serif;color:#000;white-space:pre;letter-spacing:-0.845px;">100%</div>
<div style="position:absolute;right:909.1999999999999px;top:403.2px;font:normal normal 12px/14px 'Liberation Sans',sans-serif;color:#000;white-space:pre;letter-spacing:-0.245px;">Українська</div>
<div style="position:absolute;left:488.6px;top:423.2px;font:normal normal 12px/14px 'Liberation Sans',sans-serif;color:#000;white-space:pre;letter-spacing:-0.295px;">French-Belgique</div>
<div style="position:absolute;right:875.1px;top:423.2px;font:normal normal 12px/14px 'Liberation Sans',sans-serif;color:#000;white-space:pre;letter-spacing:-0.845px;">100%</div>
<div style="position:absolute;right:909.1999999999999px;top:423.2px;font:normal normal 12px/14px 'Liberation Sans',sans-serif;color:#000;white-space:pre;letter-spacing:-0.245px;">Français</div>
<div style="position:absolute;left:488.6px;top:443.2px;font:normal normal 12px/14px 'Liberation Sans',sans-serif;color:#000;white-space:pre;letter-spacing:-0.295px;">Norwegian</div>
<div style="position:absolute;right:875.1px;top:443.2px;font:normal normal 12px/14px 'Liberation Sans',sans-serif;color:#000;white-space:pre;letter-spacing:-0.845px;">100%</div>
<div style="position:absolute;right:909.1999999999999px;top:443.2px;font:normal normal 12px/14px 'Liberation Sans',sans-serif;color:#000;white-space:pre;letter-spacing:-0.245px;">Norsk</div>
<div style="position:absolute;left:488.6px;top:463.2px;font:normal normal 12px/14px 'Liberation Sans',sans-serif;color:#000;white-space:pre;letter-spacing:-0.295px;">Lithuanian</div>
<div style="position:absolute;right:875.1px;top:463.2px;font:normal normal 12px/14px 'Liberation Sans',sans-serif;color:#000;white-space:pre;letter-spacing:-0.845px;">100%</div>
<div style="position:absolute;right:909.1999999999999px;top:463.2px;font:normal normal 12px/14px 'Liberation Sans',sans-serif;color:#000;white-space:pre;letter-spacing:-0.245px;">Lietuviuų</div>
<svg style="left:469px;top:491px" width="13" height="17" viewBox="0 0 13 17" fill="#fbfbfb" stroke="#6b6b6b" stroke-width="1">
<path d="M3.500 3.500v-2.500h6l2.500 2.500v9h-2.500"/><path d="M.5 3.500h6l2.500 2.500v9.500h-8.500z"/><path d="M6.500 3.500v2.500h2.500" fill="none"/></svg>
<div style="position:absolute;left:489px;top:493.2px;font:normal normal 12px/14px 'Liberation Sans',sans-serif;color:#000;white-space:pre;letter-spacing:-0.445px;">Translate</div>
<div style="position:absolute;left:489px;top:513.2px;font:normal normal 12px/14px 'Liberation Sans',sans-serif;color:#000;white-space:pre;letter-spacing:-0.105px;">Load from File (Unicode)</div>
</body></html>
